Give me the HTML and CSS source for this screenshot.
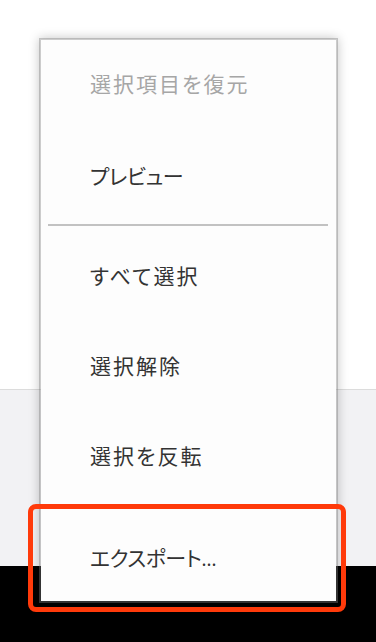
FILE: index.html
```html
<!DOCTYPE html>
<html lang="ja">

<head>
    <meta charset="UTF-8">
    <meta name="viewport" content="width=device-width, initial-scale=1.0">
    <title>Context Menu</title>
    <link rel="stylesheet" href="styles.css">
</head>

<body>
    <div class="page">
        <div class="band-top"></div>
        <div class="band-mid"></div>
        <div class="band-bottom"></div>
    </div>

    <!-- context menu over the page -->
    <div class="menu">
        <div class="item first disabled">選択項目を復元</div>
        <div class="item kana">プレビュー</div>
        <div class="separator"></div>
        <div class="item">すべて選択</div>
        <div class="item">選択解除</div>
        <div class="item">選択を反転</div>
        <div class="item kana last"><span>エクスポート<span class="dots">...</span></span></div>
    </div>

    <!-- red highlight around the export item -->
    <div class="highlight"></div>
</body>

</html>
```

FILE: styles.css
```css
body {
    margin: 0;
    width: 376px;
    height: 642px;
    overflow: hidden;
    font-family: "Noto Sans CJK JP", "Noto Sans", sans-serif;
    position: relative;
}

.page {
    display: flex;
    flex-direction: column;
    height: 100%;
}

.band-top {
    height: 389px;
    background: #ffffff;
}

.band-mid {
    height: 176px;
    background: #f2f2f4;
    border-top: 1px solid #dcdcdc;
}

.band-bottom {
    flex: 1;
    background: #000000;
}

/* Menu panel */
.menu {
    position: absolute;
    left: 39px;
    top: 38px;
    width: 295px;
    height: 561px;
    background: #fdfdfd;
    background-clip: padding-box;
    border: 2px solid rgba(128, 128, 128, 0.4);
    box-shadow: 0 0 10px rgba(0, 0, 0, 0.22);
    display: flex;
    flex-direction: column;
}

.item {
    height: 90px;
    flex-shrink: 0;
    box-sizing: border-box;
    display: flex;
    align-items: center;
    padding-left: 49px;
    font-size: 21px;
    color: #333333;
    letter-spacing: 2px;
    font-feature-settings: "palt";
}

.item.kana {
    letter-spacing: -0.5px;
}

.item.first {
    padding-bottom: 4px;
}

.item.disabled {
    color: #a6a6a6;
}

.item.last {
    flex: 1;
    height: auto;
    padding-top: 12px;
}

.dots {
    letter-spacing: 0;
    font-size: 18px;
}

.separator {
    height: 2px;
    margin: 4px 8px 4px 7px;
    background: #c2c2c2;
    flex-shrink: 0;
}

/* Highlight box */
.highlight {
    position: absolute;
    left: 28px;
    top: 504px;
    width: 308px;
    height: 98px;
    border: 5px solid #ff3a0a;
    border-radius: 8px;
}
```
